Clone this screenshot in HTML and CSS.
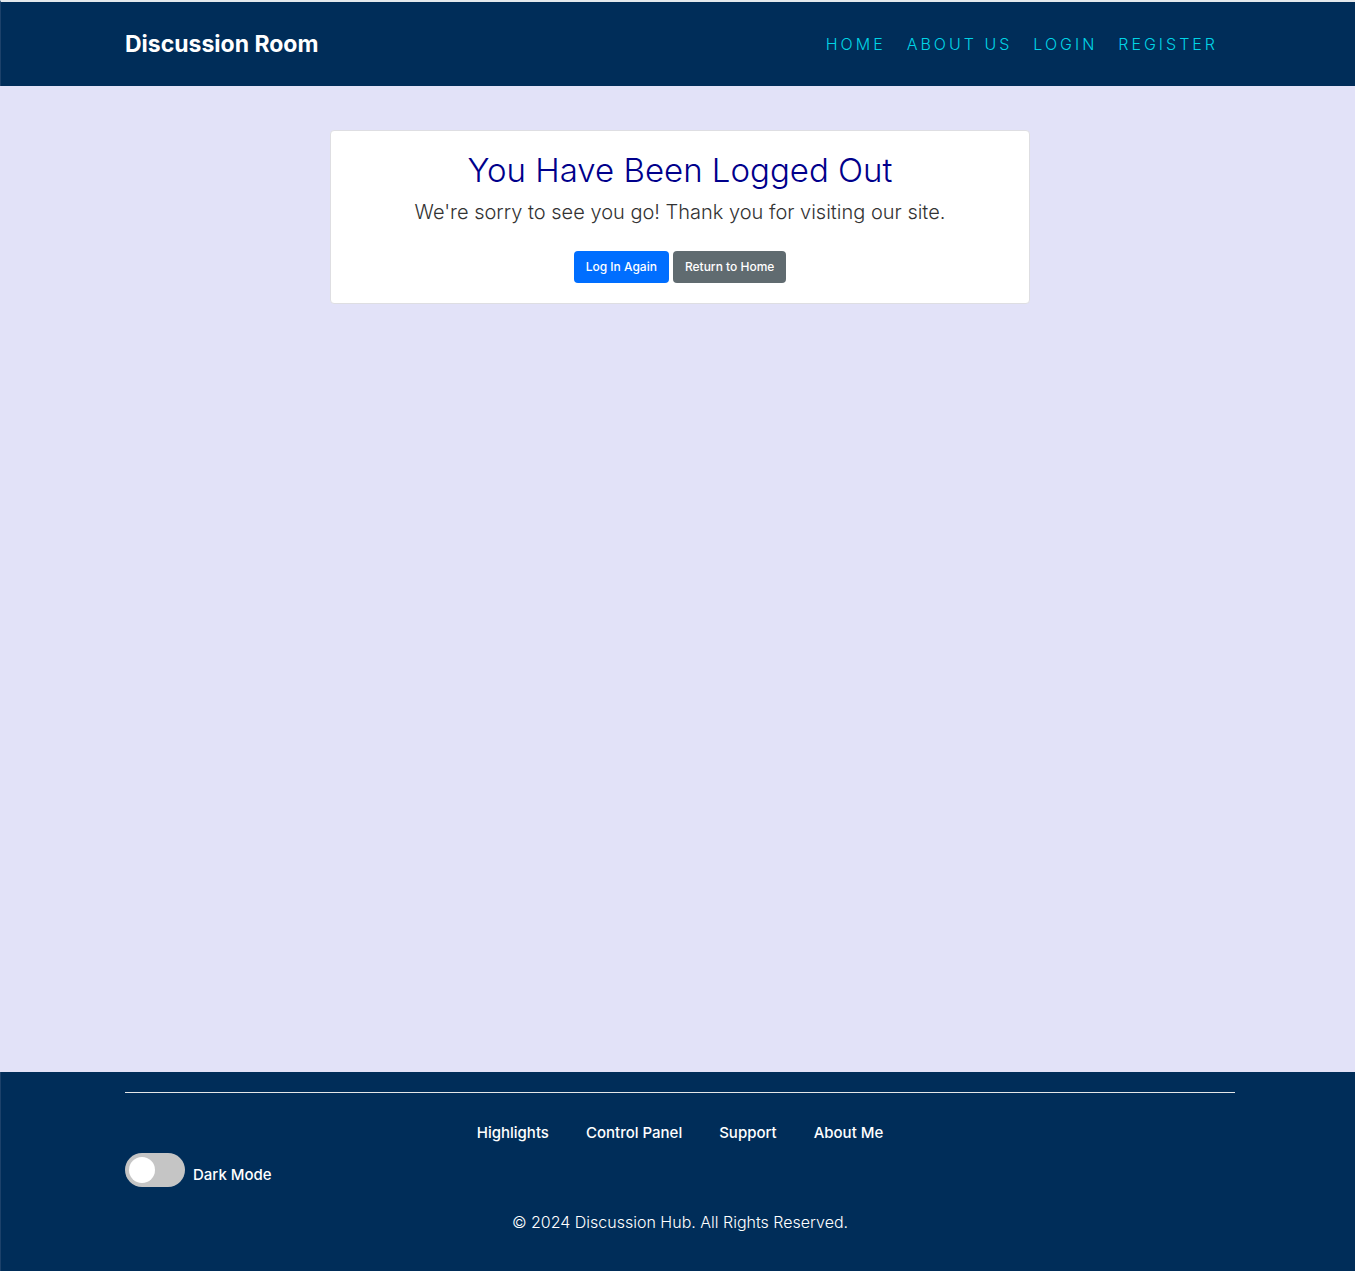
FILE: index.html
```html
<!DOCTYPE html>
<html lang="en">
<head>
<meta charset="utf-8">
<meta name="viewport" content="width=device-width, initial-scale=1">
<title>Discussion Room</title>
<link rel="stylesheet" href="styles.css">
</head>
<body>
<header class="site-header">
  <div class="container header-row">
    <a class="brand" href="#">Discussion Room</a>
    <nav class="main-nav">
      <a href="#">HOME</a>
      <a href="#">ABOUT US</a>
      <a href="#">LOGIN</a>
      <a href="#">REGISTER</a>
    </nav>
  </div>
</header>
<main class="content">
  <section class="card">
    <h1 class="card-title">You Have Been Logged Out</h1>
    <p class="card-text">We're sorry to see you go! Thank you for visiting our site.</p>
    <div class="actions">
      <button type="button" class="btn btn-primary">Log In Again</button>
      <button type="button" class="btn btn-secondary">Return to Home</button>
    </div>
  </section>
</main>
<footer class="site-footer">
  <div class="container">
    <hr class="rule">
    <nav class="footer-nav">
      <a href="#">Highlights</a>
      <a href="#">Control Panel</a>
      <a href="#">Support</a>
      <a href="#">About Me</a>
    </nav>
    <div class="theme">
      <input class="switch" type="checkbox" id="dark-mode">
      <label for="dark-mode">Dark Mode</label>
    </div>
    <p class="copyright">© 2024 Discussion Hub. All Rights Reserved.</p>
  </div>
</footer>
</body>
</html>
```
FILE: styles.css
```css
* {
  box-sizing: border-box;
}

body {
  display: flex;
  flex-direction: column;
  min-height: 100vh;
  margin: 0;
  background: #e2e2f8;
  font-family: Inter, "Liberation Sans", sans-serif;
  font-size: 16px;
  line-height: 24px;
}

a {
  color: inherit;
  text-decoration: none;
}

.content {
  padding-left: 5px;
}

.site-header,
.site-footer {
  padding-left: 4px;
  background: #002d59;
  color: #fff;
  border-left: 1px solid #1c416a;
}

.site-header {
  border-top: 2px solid #e3e8ec;
}

.container {
  width: 100%;
  max-width: 1140px;
  margin: 0 auto;
  padding: 0 15px;
}

.header-row {
  display: flex;
  flex-wrap: wrap;
  align-items: center;
  justify-content: space-between;
  min-height: 84px;
}

.brand {
  font-size: 23px;
  font-weight: 700;
}

.main-nav {
  display: flex;
  flex-wrap: wrap;
  gap: 21px;
  padding-right: 17px;
  color: #00d5e6;
  font-weight: 300;
  letter-spacing: 3px;
}

.content {
  flex: 1;
  padding-top: 44px;
}

.card {
  max-width: 700px;
  margin: 0 auto;
  padding: 20px;
  background: #fff;
  border: 1px solid #dedee2;
  border-radius: 4px;
  text-align: center;
}

.card-title {
  margin: 0 0 8px;
  color: #00008b;
  font-size: 33px;
  font-weight: 300;
  line-height: 38px;
}

.card-text {
  margin: 0 0 24px;
  color: #333;
  font-size: 20px;
  font-weight: 300;
  line-height: 30px;
}

.actions {
  display: flex;
  justify-content: center;
  gap: 4px;
}

.btn {
  height: 32px;
  padding: 0 12px 2px;
  border: 0;
  border-radius: 4px;
  color: #fff;
  font-family: inherit;
  font-size: 12px;
  font-weight: 500;
}

.btn-primary {
  background: #006eff;
}

.btn-secondary {
  background: #606b70;
}

.site-footer {
  padding-top: 20px;
  padding-bottom: 37px;
}

.rule {
  margin: 0;
  border: 0;
  border-top: 1px solid #e3e6e8;
}

.footer-nav {
  display: flex;
  flex-wrap: wrap;
  justify-content: center;
  gap: 37px;
  padding: 28px 0 8px;
  font-size: 15px;
  font-weight: 500;
}

.theme {
  display: flex;
  align-items: flex-end;
  gap: 8px;
  height: 34px;
  font-size: 15px;
  font-weight: 500;
}

.switch {
  appearance: none;
  width: 60px;
  height: 34px;
  margin: 0;
  padding: 4px;
  border-radius: 17px;
  background: #c5c5c5;
}

.switch::before {
  content: "";
  display: block;
  width: 26px;
  height: 26px;
  border-radius: 50%;
  background: #fff;
}

.switch:checked::before {
  margin-left: auto;
}

.copyright {
  margin: 23px 0 0;
  font-weight: 300;
  text-align: center;
}
```
